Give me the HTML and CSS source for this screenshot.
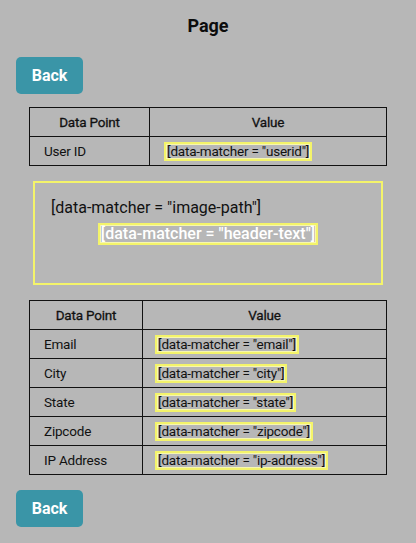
FILE: index.html
```html
<!DOCTYPE html>
<html>
<head>
<meta charset="utf-8">
<link rel="stylesheet" href="styles.css">
</head>
<body>
<div class="page">
  <h1 class="title">Page</h1>
  <div class="actions"><button class="back">Back</button></div>
  <table class="data t1">
    <thead><tr><th class="c1">Data Point</th><th>Value</th></tr></thead>
    <tbody>
      <tr><td>User ID</td><td><span class="hl">[data-matcher = "userid"]</span></td></tr>
    </tbody>
  </table>
  <div class="hero">
    <div class="img-path">[data-matcher = "image-path"]</div>
    <div class="hdr-row"><span class="hl hdr">[data-matcher = "header-text"]</span></div>
  </div>
  <table class="data t2">
    <thead><tr><th class="c1">Data Point</th><th>Value</th></tr></thead>
    <tbody>
      <tr><td>Email</td><td><span class="hl">[data-matcher = "email"]</span></td></tr>
      <tr><td>City</td><td><span class="hl">[data-matcher = "city"]</span></td></tr>
      <tr><td>State</td><td><span class="hl">[data-matcher = "state"]</span></td></tr>
      <tr><td>Zipcode</td><td><span class="hl">[data-matcher = "zipcode"]</span></td></tr>
      <tr><td>IP Address</td><td><span class="hl">[data-matcher = "ip-address"]</span></td></tr>
    </tbody>
  </table>
  <div class="actions bottom"><button class="back">Back</button></div>
</div>
</body>
</html>
```
FILE: styles.css
```css
html, body {
  margin: 0;
  padding: 0;
  background: #b7b7b7;
}
body {
  font-family: Roboto, "Liberation Sans", sans-serif;
  color: #111;
}
.page {
  display: flex;
  flex-direction: column;
  padding: 15px 0 0 0;
}
.title {
  margin: 0;
  font-size: 18px;
  line-height: 22px;
  font-weight: 700;
  text-align: center;
  color: #0c0c0c;
}
.actions {
  padding-left: 16px;
  margin-top: 20px;
}
.actions.bottom {
  margin-top: 15px;
}
.back {
  width: 67px;
  height: 37px;
  border: none;
  border-radius: 5px;
  background: #3a95a7;
  color: #fff;
  font-family: Roboto, "Liberation Sans", sans-serif;
  font-size: 16px;
  font-weight: 700;
  padding: 0;
}
.data {
  border-collapse: collapse;
  margin: 13px 0 0 29px;
  width: 358px;
  font-size: 13.5px;
  letter-spacing: -0.2px;
}
.t2 { margin-top: 15px; }
.data th, .data td {
  border: 1px solid #111;
  height: 28px;
  padding: 0 0 0 14px;
  text-align: left;
}
.t2 td + td { padding-left: 12px; }
.data th {
  font-weight: 400;
  -webkit-text-stroke: 0.3px #111;
  text-align: center;
  padding: 0;
}
.t1 .c1 { width: 119px; }
.t2 .c1 { width: 112px; }
.hl {
  display: inline-block;
  border: 2px solid #f4f46a;
  box-shadow: inset 0 0 0 1px #f7f7b0;
  padding: 0 1px;
  line-height: 15px;
}
.hero {
  margin: 15px 0 0 33px;
  width: 350px;
  height: 104px;
  box-sizing: border-box;
  border: 2px solid #f4f46a;
  padding: 15px 16px 0 16px;
  font-size: 16px;
}
.img-path {
  line-height: 19px;
  color: #111;
}
.hdr-row {
  text-align: center;
  margin-top: 6px;
}
.hdr {
  color: #fff;
  font-weight: 500;
  line-height: 18px;
  letter-spacing: 0;
}
```
